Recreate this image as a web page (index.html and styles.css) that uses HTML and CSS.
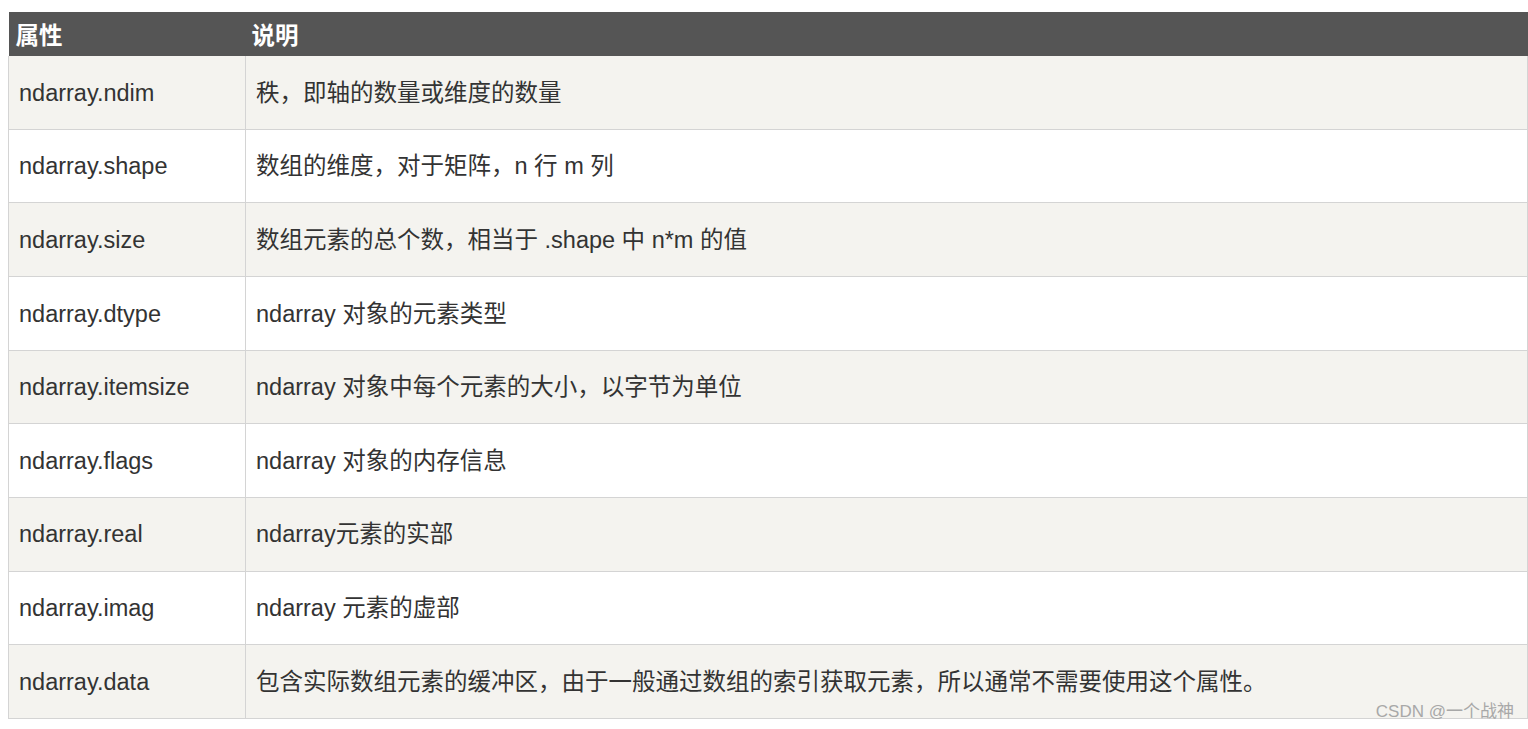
FILE: index.html
```html
<!DOCTYPE html>
<html lang="zh">
<head>
<meta charset="utf-8">
<link rel="stylesheet" href="styles.css">
</head>
<body>
<div class="wrap">
<table class="attr-table">
  <thead>
    <tr><th class="col-name">属性</th><th>说明</th></tr>
  </thead>
  <tbody>
    <tr><td>ndarray.ndim</td><td>秩，即轴的数量或维度的数量</td></tr>
    <tr><td>ndarray.shape</td><td>数组的维度，对于矩阵，n 行 m 列</td></tr>
    <tr><td>ndarray.size</td><td>数组元素的总个数，相当于 .shape 中 n*m 的值</td></tr>
    <tr><td>ndarray.dtype</td><td>ndarray 对象的元素类型</td></tr>
    <tr><td>ndarray.itemsize</td><td>ndarray 对象中每个元素的大小，以字节为单位</td></tr>
    <tr><td>ndarray.flags</td><td>ndarray 对象的内存信息</td></tr>
    <tr><td>ndarray.real</td><td>ndarray元素的实部</td></tr>
    <tr><td>ndarray.imag</td><td>ndarray 元素的虚部</td></tr>
    <tr><td>ndarray.data</td><td>包含实际数组元素的缓冲区，由于一般通过数组的索引获取元素，所以通常不需要使用这个属性。</td></tr>
  </tbody>
</table>
<div class="watermark">CSDN @一个战神</div>
</div>
</body>
</html>
```

FILE: styles.css
```css
html, body {
  margin: 0;
  padding: 0;
  background: #fff;
}
body {
  font-family: "Liberation Sans", Arial, "Noto Sans CJK SC", sans-serif;
  color: #333;
}
.wrap {
  position: relative;
  padding: 12px 0 0 8px;
  width: 1520px;
}
.attr-table {
  border-collapse: collapse;
  width: 1520px;
  table-layout: fixed;
  font-size: 23.5px;
}
.attr-table th {
  background: #555;
  color: #fff;
  font-weight: bold;
  text-align: left;
  height: 44px;
  padding: 4px 6px 0;
  font-size: 23.5px;
  line-height: 40px;
  vertical-align: middle;
  box-sizing: border-box;
}
.attr-table th.col-name {
  width: 237px;
  padding-left: 7px;
}
.attr-table td {
  border: 1px solid #d4d4d4;
  padding: 1px 10px 0;
  height: 71.67px;
  vertical-align: middle;
  line-height: 1.3;
}
.attr-table thead + tbody tr:first-child td {
  border-top: none;
}
.attr-table tbody tr:nth-child(odd) td {
  background: #f4f3ef;
}
.attr-table tbody tr:nth-child(even) td {
  background: #fff;
}
.watermark {
  position: absolute;
  right: 14px;
  bottom: -3px;
  font-size: 17px;
  color: #a8a8a8;
  font-family: "Liberation Sans", Arial, "Noto Sans CJK SC", sans-serif;
}
```
